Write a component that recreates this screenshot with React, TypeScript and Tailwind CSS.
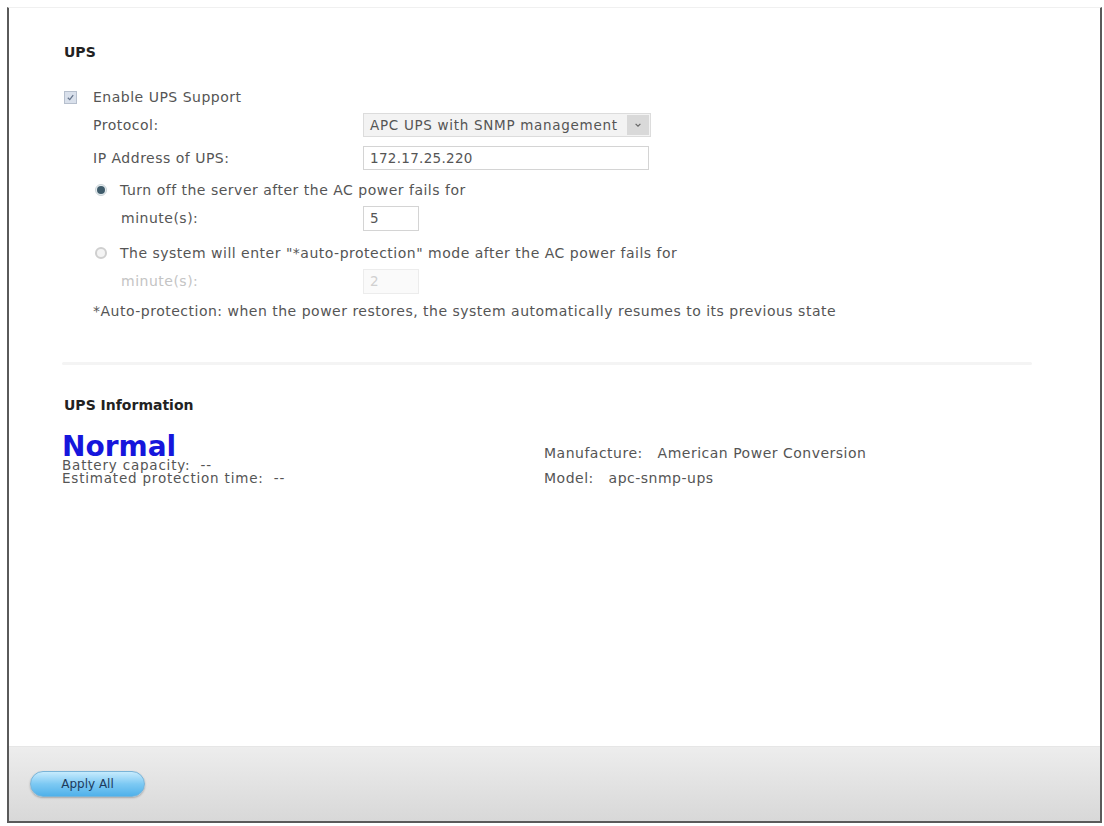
import React from "react";

const font = { fontFamily: '"DejaVu Sans", Verdana, sans-serif' };

function Checkbox() {
  return (
    <div className="flex h-[13px] w-[13px] items-center justify-center border border-[#b6bfcd] bg-[#d9e0eb]">
      <svg viewBox="0 0 10 10" className="h-[9px] w-[9px]">
        <path d="M2 5.2 L4.2 7.4 L8 2.4" fill="none" stroke="#66758c" strokeWidth="1.4" />
      </svg>
    </div>
  );
}

function Radio({ checked }: { checked: boolean }) {
  return checked ? (
    <div className="flex h-[12px] w-[12px] items-center justify-center rounded-full border border-[#c9d3d8] bg-[#e8eef0]">
      <div className="h-[8px] w-[8px] rounded-full bg-[#3f5c6b]" />
    </div>
  ) : (
    <div className="flex h-[12px] w-[12px] items-center justify-center rounded-full border-2 border-[#cfcfcf] bg-[#f4f4f4]" />
  );
}

export default function App() {
  return (
    <div className="min-h-[826px] bg-white pl-[7px] pt-[7px]" style={font}>
      <div className="flex h-[816px] w-[1095px] flex-col border-x-2 border-b-2 border-t border-x-[#5a5a5a] border-b-[#5a5a5a] border-t-[#f0f0f0]">
        {/* main content */}
        <div className="flex flex-1 flex-col pl-[55px] text-[14px] tracking-[0.5px] text-[#555]">
          <div className="mt-[36px] h-[16px] text-[14px] font-bold leading-[16px] tracking-normal text-[#222]">UPS</div>

          <div className="mt-[27px] flex h-[20px] items-center">
            <Checkbox />
            <span className="ml-[16px]">Enable UPS Support</span>
          </div>

          <div className="ml-[29px] mt-[6px] flex h-[24px] items-center">
            <span className="w-[270px]">Protocol:</span>
            <div className="flex h-[24px] w-[288px] items-center border border-[#dcdcdc] bg-[#f3f3f3]">
              <span className="flex-1 pl-[6px] text-[13.5px] tracking-[0.7px]">APC UPS with SNMP management</span>
              <div className="mr-[1px] flex h-[20px] w-[22px] items-center justify-center bg-[#d9d9d9]">
                <svg viewBox="0 0 10 10" className="h-[8px] w-[8px]">
                  <path d="M2 3.5 L5 6.5 L8 3.5" fill="none" stroke="#666" strokeWidth="1.5" />
                </svg>
              </div>
            </div>
          </div>

          <div className="ml-[29px] mt-[9px] flex h-[24px] items-center">
            <span className="w-[270px]">IP Address of UPS:</span>
            <div className="flex h-[24px] w-[286px] items-center border border-[#d4d4d4] bg-white pl-[6px] text-[13.5px] tracking-[0.3px]">
              172.17.25.220
            </div>
          </div>

          <div className="ml-[31px] mt-[10px] flex h-[20px] items-center">
            <Radio checked />
            <span className="ml-[13px]">Turn off the server after the AC power fails for</span>
          </div>

          <div className="ml-[57px] mt-[6px] flex h-[25px] items-center">
            <span className="w-[242px]">minute(s):</span>
            <div className="flex h-[25px] w-[56px] items-center border border-[#d4d4d4] bg-white pl-[6px] text-[13.5px]">5</div>
          </div>

          <div className="ml-[31px] mt-[12px] flex h-[20px] items-center">
            <Radio checked={false} />
            <span className="ml-[13px]">The system will enter "*auto-protection" mode after the AC power fails for</span>
          </div>

          <div className="ml-[57px] mt-[6px] flex h-[25px] items-center text-[#c4c4c4]">
            <span className="w-[242px]">minute(s):</span>
            <div className="flex h-[25px] w-[56px] items-center border border-[#ececec] bg-[#fafafa] pl-[6px] text-[13.5px] text-[#d0d0d0]">2</div>
          </div>

          <div className="ml-[29px] mt-[7px] flex h-[20px] items-center">
            *Auto-protection: when the power restores, the system automatically resumes to its previous state
          </div>

          <div className="-ml-[2px] mt-[41px] h-[3px] w-[970px] rounded-full bg-[#f4f4f4]" />

          <div className="mt-[32px] h-[16px] text-[14px] font-bold leading-[16px] tracking-normal text-[#222]">UPS Information</div>

          <div className="-ml-[2px] mt-[22px] flex">
            <div className="w-[482px]">
              <div className="h-[24px] text-[28px] font-bold leading-[24px] tracking-normal text-[#1616dc]">Normal</div>
              <div className="text-[13.5px] leading-[13px] tracking-[0.8px]">Battery capacity:&nbsp;&nbsp;--</div>
              <div className="text-[13.5px] leading-[13px] tracking-[0.8px]">Estimated protection time:&nbsp;&nbsp;--</div>
            </div>
            <div className="pt-[10px]">
              <div className="h-[16px] leading-[16px]">Manufacture:&nbsp;&nbsp;&nbsp;American Power Conversion</div>
              <div className="mt-[9px] h-[16px] leading-[16px]">Model:&nbsp;&nbsp;&nbsp;apc-snmp-ups</div>
            </div>
          </div>
        </div>

        {/* footer */}
        <div className="flex h-[75px] items-center border-t border-[#e6e6e6] bg-gradient-to-b from-[#ededed] to-[#d8d8d8] pl-[21px]">
          <button className="h-[26px] w-[115px] rounded-full border border-[#79b4d8] bg-gradient-to-b from-[#c6ebfd] via-[#7cc9f3] to-[#4fb1ea] text-[12px] text-[#1d3b5c] shadow-[0_1px_2px_rgba(0,0,0,0.25)]">
            Apply All
          </button>
        </div>
      </div>
    </div>
  );
}
